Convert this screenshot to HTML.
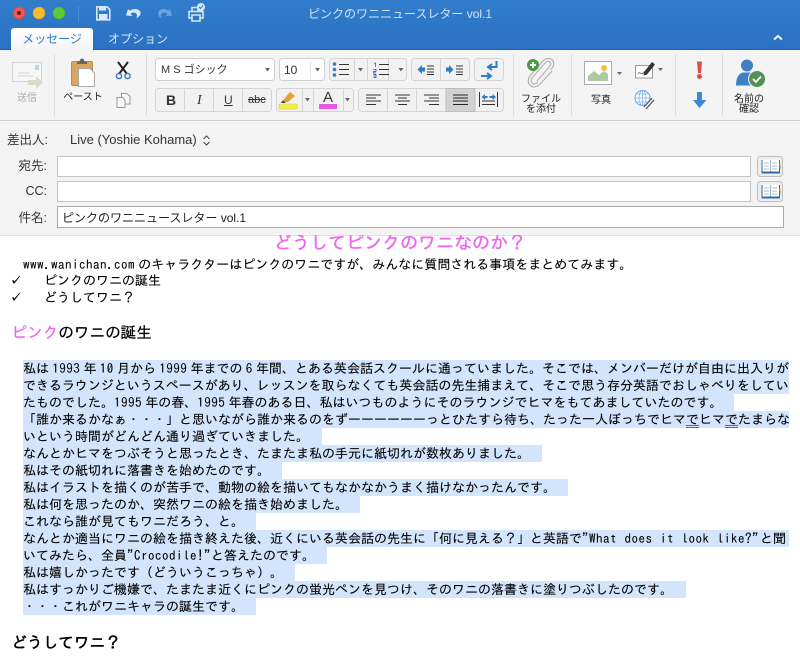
<!DOCTYPE html>
<html lang="ja"><head><meta charset="utf-8"><title>ピンクのワニニュースレター vol.1</title>
<style>
html,body{margin:0;padding:0;background:#fff}
#p{position:relative;width:800px;height:667px;overflow:hidden;font-family:"Liberation Sans","Noto Sans CJK JP",sans-serif;color:#222}
#p div{position:absolute;white-space:nowrap}
.tb{left:0;top:0;width:800px;height:50px;background:linear-gradient(#317dcc,#2a71c2);border-bottom:1px solid #2560a8;box-sizing:border-box}
.rb{left:0;top:50px;width:800px;height:71px;background:#f4f4f4;border-bottom:1px solid #cfcfcf;box-sizing:border-box}
.hd{left:0;top:121px;width:800px;height:114px;background:#f3f3f3;border-bottom:1px solid #e2e2e2;box-sizing:content-box}
.l{font-size:10px;line-height:10px;text-align:center;color:#222;transform:translateX(-50%)}
.lab{font-size:12.5px;line-height:16px;color:#333;text-align:right;width:60px}
.inp{background:#fff;border:1px solid #c3c3c3;box-sizing:border-box}
.b{font-family:"IPAGothic","Noto Sans CJK JP",sans-serif;font-size:13px;line-height:17px;color:#000;height:17px;word-spacing:-3.25px;-webkit-text-stroke:.1px #000}
.s{left:23px;background:#d3e5fc;height:17px;overflow:hidden}
.a{letter-spacing:.5px}
.u{text-decoration:underline double #3a6fc0}
</style></head><body><div id="p">
<div class="tb"></div><div class="rb"></div><div class="hd"></div>

<div style="left:11px;top:28px;width:82px;height:23px;background:linear-gradient(#fff,#f4f4f4);border-radius:3px 3px 0 0"></div>
<div style="left:11px;top:31px;width:82px;text-align:center;font-size:12px;line-height:16px;color:#2f7bc9">メッセージ</div>
<div style="left:108px;top:31px;font-size:12px;line-height:16px;color:#d8e6f6">オプション</div>
<div style="left:0;top:5px;width:800px;text-align:center;font-size:12px;line-height:18px;color:#d2e3f6">ピンクのワニニュースレター vol.1</div>

<svg style="position:absolute;left:0;top:0" width="800" height="235" viewBox="0 0 800 235">
<!-- traffic lights -->
<circle cx="19" cy="13" r="6" fill="#ee5a52" stroke="#c9433c" stroke-width=".6"/><circle cx="19" cy="13" r="2" fill="#7a1512"/>
<circle cx="39" cy="13" r="6" fill="#f7bd30" stroke="#d89f22" stroke-width=".6"/>
<circle cx="59" cy="13" r="6" fill="#5dc83c" stroke="#47a92c" stroke-width=".6"/>
<path d="M78.500 6V22" stroke="#4f8cd0"/>
<!-- save -->
<path d="M96.800 6.800H107L109.800 9.500V19.800H96.800Z" fill="none" stroke="#d9e7f6" stroke-width="1.600"/>
<rect x="99" y="6" width="7" height="4.500" fill="#d9e7f6"/><rect x="99" y="14" width="8.500" height="5.500" fill="#d9e7f6"/>
<!-- undo -->
<path d="M128 9L126 15.500L132.500 16L130.500 13.500C133 11.500 137 12.500 137 15.500C137 16.500 136.500 17.500 136 18C139.500 17 141.500 14.500 140.500 12C139 8.500 133 8 129.800 10.800Z" fill="#d9e7f6"/>
<!-- redo -->
<path d="M170 9L172 15.500L165.500 16L167.500 13.500C165 11.500 161 12.500 161 15.500C161 16.500 161.500 17.500 162 18C158.500 17 157.500 14.500 158.500 12C160 8.500 165 8 168.200 10.800Z" fill="#6da3dc"/>
<!-- print -->
<path d="M192 11V7.500H198V11M192 18H189V11.500H203V18H200M192 15H200V21H192Z" fill="none" stroke="#d9e7f6" stroke-width="1.600"/>
<circle cx="201" cy="7" r="4" fill="#d9e7f6"/><path d="M199 7L200.500 8.500L203 5.500" fill="none" stroke="#2f7bc9"/>
<!-- chevron -->
<path d="M774 39.500L778 36L782 39.500" fill="none" stroke="#eef4fb" stroke-width="2"/>

<!-- separators -->
<g stroke="#dedede"><path d="M54.500 54V116M146.500 54V116M513.500 54V116M571.500 54V116M675.500 54V116M722.500 54V116"/></g>

<!-- send -->
<rect x="12.500" y="62.500" width="29" height="19" fill="#f7f7f7" stroke="#d5d5d5"/>
<rect x="35" y="65" width="4" height="5" fill="#bcd5ee"/>
<path d="M18 73H30M18 76H34" stroke="#d5d5d5"/>
<path d="M28 80H36V76L43 82.500L36 89V85H28Z" fill="#d7dccb"/>
<!-- paste -->
<rect x="71.500" y="61.500" width="21" height="24" rx="1.500" fill="#d9a55f" stroke="#bd8a48"/>
<path d="M77 64V61.500H79.500C80 57.500 84 57.500 84.500 61.500H87V64Z" fill="#666"/>
<path d="M78.500 68.500H90L94.500 73V86.500H78.500Z" fill="#fff" stroke="#aaa"/>
<!-- scissors -->
<g fill="none" stroke="#222" stroke-width="2"><path d="M118 62L127 74M128 62L119 74"/></g>
<circle cx="119" cy="76" r="2.600" fill="none" stroke="#3277c4" stroke-width="1.400"/><circle cx="127.500" cy="76" r="2.600" fill="none" stroke="#3277c4" stroke-width="1.400"/>
<!-- copy -->
<path d="M121.500 93.500H127L130 96.500V104H121.500Z" fill="#fafafa" stroke="#999"/>
<path d="M117 97.500H122.500L125 100V107.500H117Z" fill="#fafafa" stroke="#999"/>

<!-- font boxes -->
<rect x="155.500" y="58.500" width="119" height="22" rx="3" fill="#fff" stroke="#d0d0d0"/>
<rect x="279.500" y="58.500" width="45" height="22" rx="3" fill="#fff" stroke="#d0d0d0"/>
<path d="M310.500 61V78" stroke="#e3e3e3"/>
<path d="M265 68H270L267.500 71.500ZM315 68H320L317.500 71.500Z" fill="#666"/>
<!-- button groups -->
<g fill="#f1f1f1" stroke="#d4d4d4">
<rect x="329.500" y="58.500" width="77" height="22" rx="3"/>
<rect x="411.500" y="58.500" width="58" height="22" rx="3"/>
<rect x="474.500" y="58.500" width="29" height="22" rx="3"/>
<rect x="155.500" y="88.500" width="116" height="23" rx="3"/>
<rect x="276.500" y="88.500" width="77" height="23" rx="3"/>
<rect x="358.500" y="88.500" width="145" height="23" rx="3"/>
</g>
<rect x="446" y="88.500" width="29" height="23" fill="#d2d2d2" stroke="#bdbdbd"/>
<g stroke="#d4d4d4"><path d="M354.500 59V80M367.500 59V80M388.500 59V80M440.500 59V80M184.500 89V111M213.500 89V111M242.500 89V111M302.500 89V111M313.500 89V111M343.500 89V111M387.500 89V111M416.500 89V111"/></g>
<!-- bullets -->
<g fill="#2f7bc9"><circle cx="334.500" cy="64" r="1.800"/><circle cx="334.500" cy="69.500" r="1.800"/><circle cx="334.500" cy="75" r="1.800"/></g>
<path d="M339 64.500H349M339 69.500H349M339 74.500H349M379 64.500H389M379 69.500H389M379 74.500H389" stroke="#333"/>
<path d="M358 68H363L360.500 71.500ZM398.500 68H403.500L401 71.500Z" fill="#666"/>
<path d="M374 63.500L375.500 63V67M373.500 69.500H376V71.500H373.500V73H376M373.500 74.500H376V77.500H373.500M373.500 76H376" stroke="#2f7bc9" fill="none" stroke-width=".9"/>
<!-- indent -->
<path d="M425 67.500H422V65L417.500 69.500L422 74V71.500H425Z" fill="#2f7bc9"/>
<path d="M427 66H434M427 69H434M427 72H434M427 74.500H434" stroke="#333"/>
<path d="M446 67.500H449V65L453.500 69.500L449 74V71.500H446Z" fill="#2f7bc9"/>
<path d="M456 66H463M456 69H463M456 72H463M456 74.500H463" stroke="#333"/>
<!-- direction -->
<path d="M496.500 61V67H489M492 64L488 67L492 70" fill="none" stroke="#2f7bc9" stroke-width="2"/>
<path d="M481 76H490M487 73L491 76L487 79" fill="none" stroke="#2f7bc9" stroke-width="2"/>
<!-- highlight, text color -->
<path d="M284 99L290 92L295 96L288 102H284Z" fill="#e2a33a"/><path d="M283 100L286 103H281Z" fill="#444"/>
<rect x="279" y="104" width="18" height="5" fill="#f4ec4e" stroke="#d8ce35" stroke-width=".5"/>
<path d="M305 98H310L307.500 101.500ZM345 98H350L347.500 101.500Z" fill="#666"/>
<rect x="319" y="104" width="18" height="5" fill="#e85ae2"/>
<!-- align -->
<path d="M366 95H381M366 98H376M366 101H381M366 104.500H376" stroke="#333"/>
<path d="M395 95H410M398 98H407M395 101H410M398 104.500H407" stroke="#333"/>
<path d="M424 95H439M429 98H439M424 101H439M429 104.500H439" stroke="#333"/>
<path d="M453 95H468M453 98H468M453 101H468M453 104.500H468" stroke="#222"/>
<path d="M479.500 92V107M497.500 92V107M482 101H495M482 104.500H495" stroke="#333"/>
<path d="M481.500 97L485 94V96H487.500V98H485V100ZM496 97L492.500 94V96H489.500V98H492.500V100Z" fill="#2f7bc9"/>

<!-- attach -->
<path d="M538 82L551 67C555 62 549 57 544 62L531 77C527 83 533 88 538 84L551 70" fill="none" stroke="#aaa" stroke-width="4"/>
<path d="M538 82L551 67C555 62 549 57 544 62L531 77C527 83 533 88 538 84L551 70" fill="none" stroke="#f1f1f1" stroke-width="2"/>
<circle cx="533" cy="65" r="6" fill="#4f9648"/><path d="M530 65H536M533 62V68" stroke="#fff" stroke-width="2"/>
<!-- photo -->
<rect x="584.500" y="61.500" width="27" height="23" fill="#fff" stroke="#aaa"/>
<path d="M588 81V76L594 71L599 75L604 71L608 74V81Z" fill="#a9cb9d"/><circle cx="604" cy="68" r="3" fill="#eec23f"/>
<path d="M617 72H622L619.500 75ZM658 68H663L660.500 71Z" fill="#666"/>
<!-- signature -->
<rect x="635.500" y="65.500" width="17" height="12.500" fill="#fff" stroke="#999"/>
<path d="M638 74C640 70 641 76 643 73S646 74 648 73" fill="none" stroke="#3a84cc"/>
<path d="M644 72L652 62L655 64.500L647 74.500L643.500 75.500Z" fill="#333"/>
<!-- globe -->
<circle cx="642.500" cy="98" r="7.500" fill="#fff" stroke="#5b9ee0"/><path d="M635 98H650M642.500 90.500V105.500M636.500 94H648.500M636.500 102H648.500" stroke="#7cb1e6" stroke-width=".8"/>
<ellipse cx="642.500" cy="98" rx="3.500" ry="7.500" fill="none" stroke="#7cb1e6" stroke-width=".8"/>
<path d="M645 108L653 99" stroke="#555" stroke-width="4"/><path d="M645 108L653 99" stroke="#f4f4f4" stroke-width="1.600"/>
<!-- importance -->
<path d="M697 61.500H702L701 73H698Z" fill="#dd4b4b"/><circle cx="699.500" cy="76.500" r="2.500" fill="#dd4b4b"/>
<path d="M697 92H702V100H706.500L699.500 108L693 100H697Z" fill="#3b87d9"/>
<!-- person -->
<circle cx="747" cy="65.500" r="6" fill="#3f7fc5"/>
<path d="M736 85.500C736 75 741 72.500 744 72.500H751C754 72.500 757 75 757 85.500Z" fill="#3f7fc5"/>
<circle cx="757" cy="79" r="9" fill="#f4f4f4"/><circle cx="757" cy="79" r="8" fill="#519153"/>
<path d="M753 79L756 82L761 76.500" fill="none" stroke="#fff" stroke-width="1.800"/>
<!-- book buttons -->
<g>
<rect x="757.500" y="156.500" width="25" height="20" rx="3" fill="#eee" stroke="#bdbdbd"/>
<rect x="757.500" y="181.500" width="25" height="20" rx="3" fill="#eee" stroke="#bdbdbd"/>
<path d="M761.500 160H780V173.500H761.500Z" fill="#2d6aa8"/><path d="M761.500 185H780V198.500H761.500Z" fill="#2d6aa8"/>
<path d="M762.500 159.500H770.500V171.500H762.500ZM771 159.500H779V171.500H771Z" fill="#fff"/><path d="M762.500 184.500H770.500V196.500H762.500ZM771 184.500H779V196.500H771Z" fill="#fff"/>
<path d="M764 163H769M764 166H769M764 169H769M772 163H777M772 166H777M772 169H777M764 188H769M764 191H769M764 194H769M772 188H777M772 191H777M772 194H777" stroke="#bbb"/>
<path d="M780 163V166" stroke="#e0b93c"/><path d="M780 166V169" stroke="#5fa04e"/><path d="M780 188V191" stroke="#e0b93c"/><path d="M780 191V194" stroke="#5fa04e"/>
</g>
</svg>

<div class="l" style="left:27px;top:94px;color:#aaa">送信</div>
<div class="l" style="left:83px;top:93px">ペースト</div>
<div style="left:161px;top:62px;font-size:11px;line-height:16px;color:#333">M S ゴシック</div>
<div style="left:284px;top:62px;font-size:12px;line-height:16px;color:#333">10</div>
<div style="left:166px;top:93px;font-size:14px;line-height:15px;font-weight:bold;color:#333">B</div>
<div style="left:197px;top:93px;font-size:14px;line-height:15px;font-family:'Liberation Serif',serif;font-style:italic;color:#333">I</div>
<div style="left:224px;top:93px;font-size:12px;line-height:15px;text-decoration:underline;color:#333">U</div>
<div style="left:248px;top:93px;font-size:11px;line-height:15px;text-decoration:line-through;color:#333">abc</div>
<div style="left:323px;top:90px;font-size:15px;line-height:16px;color:#333">A</div>
<div class="l" style="left:541px;top:95px;line-height:10px">ファイル<br>を添付</div>
<div class="l" style="left:601px;top:96px">写真</div>
<div class="l" style="left:749px;top:95px;line-height:10px">名前の<br>確認</div>

<div class="lab" style="width:auto;left:7px;top:132px">差出人:</div>
<div style="left:70px;top:132px;font-size:13px;line-height:16px;color:#333">Live (Yoshie Kohama)</div>
<svg style="position:absolute;left:202px;top:134px" width="9" height="13"><path d="M1.500 5L4.500 2L7.500 5M1.500 8L4.500 11L7.500 8" fill="none" stroke="#444"/></svg>
<div class="lab" style="left:-13px;top:158px">宛先:</div>
<div class="inp" style="left:57px;top:156px;width:694px;height:21px"></div>
<div class="lab" style="left:-13px;top:183px">CC:</div>
<div class="inp" style="left:57px;top:181px;width:694px;height:21px"></div>
<div class="lab" style="left:-13px;top:210px">件名:</div>
<div class="inp" style="left:57px;top:206px;width:727px;height:22px;border-color:#aaa"></div>
<div style="left:62px;top:210px;font-size:12px;line-height:16px;color:#222">ピンクのワニニュースレター vol.1</div>

<div class="b" style="left:0;top:234px;width:800px;height:18px;text-align:center;font-size:18px;line-height:18px;color:#ee66f0;-webkit-text-stroke:.4px #ee66f0;clip-path:inset(1px 0 0 0)">どうしてピンクのワニなのか？</div>
<div class="b" style="left:23px;top:256px"><span class="a">www.wanichan.com</span> のキャラクターはピンクのワニですが、みんなに質問される事項をまとめてみます。</div>
<div class="b" style="left:10px;top:272px;font-size:11px;-webkit-text-stroke:.5px #000">✓</div><div class="b" style="left:44px;top:272px">ピンクのワニの誕生</div>
<div class="b" style="left:10px;top:289px;font-size:11px;-webkit-text-stroke:.5px #000">✓</div><div class="b" style="left:44px;top:289px">どうしてワニ？</div>
<div class="b" style="left:11.500px;top:323px;font-size:15.600px;line-height:18px;height:18px;-webkit-text-stroke:.25px"><span style="color:#ee66f0;-webkit-text-stroke:.25px #ee66f0">ピンク</span>のワニの誕生</div>

<div class="b s" style="top:360px;width:766px">私は <span class="a">1993</span> 年 <span class="a">10</span> 月から <span class="a">1999</span> 年までの <span class="a">6</span> 年間、とある英会話スクールに通っていました。そこでは、メンバーだけが自由に出入りが</div>
<div class="b s" style="top:377px;width:766px;letter-spacing:-.02px">できるラウンジというスペースがあり、レッスンを取らなくても英会話の先生捕まえて、そこで思う存分英語でおしゃべりをしてい</div>
<div class="b s" style="top:394px;width:711px">たものでした。<span class="a">1995</span> 年の春、<span class="a">1995</span> 年春のある日、私はいつものようにそのラウンジでヒマをもてあましていたのです。</div>
<div class="b s" style="top:411px;width:766px">「誰か来るかなぁ・・・」と思いながら誰か来るのをずーーーーーーっとひたすら待ち、たった一人ぼっちでヒマ<span class="u">で</span>ヒマ<span class="u">で</span>たまらな</div>
<div class="b s" style="top:428px;width:299px">いという時間がどんどん通り過ぎていきました。</div>
<div class="b s" style="top:445px;width:519px">なんとかヒマをつぶそうと思ったとき、たまたま私の手元に紙切れが数枚ありました。</div>
<div class="b s" style="top:462px;width:259px">私はその紙切れに落書きを始めたのです。</div>
<div class="b s" style="top:479px;width:545px">私はイラストを描くのが苦手で、動物の絵を描いてもなかなかうまく描けなかったんです。</div>
<div class="b s" style="top:496px;width:337px">私は何を思ったのか、突然ワニの絵を描き始めました。</div>
<div class="b s" style="top:513px;width:233px">これなら誰が見てもワニだろう、と。</div>
<div class="b s" style="top:530px;width:766px">なんとか適当にワニの絵を描き終えた後、近くにいる英会話の先生に「何に見える？」と英語で<span class="a" style="word-spacing:.5px">"What does it look like?"</span><span style="margin-left:1px">と聞</span></div>
<div class="b s" style="top:547px;width:304px">いてみたら、全員<span class="a">"Crocodile!"</span>と答えたのです。</div>
<div class="b s" style="top:564px;width:272px">私は嬉しかったです（どういうこっちゃ）。</div>
<div class="b s" style="top:581px;width:663px">私はすっかりご機嫌で、たまたま近くにピンクの蛍光ペンを見つけ、そのワニの落書きに塗りつぶしたのです。</div>
<div class="b s" style="top:598px;width:233px">・・・これがワニキャラの誕生です。</div>
<div class="b" style="left:11.500px;top:633px;font-size:15.600px;line-height:18px;height:18px;-webkit-text-stroke:.5px #000">どうしてワニ？</div>
</div></body></html>
